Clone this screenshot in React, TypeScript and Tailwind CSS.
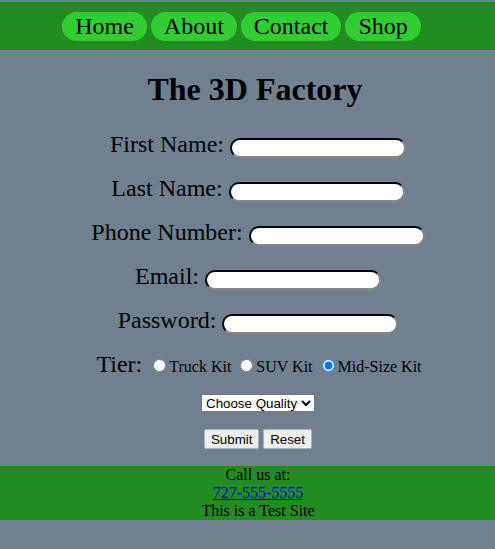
import React from 'react';

const navLinks = ['Home', 'About', 'Contact', 'Shop'];

const fields = [
  { label: 'First Name:', type: 'text' },
  { label: 'Last Name:', type: 'text' },
  { label: 'Phone Number:', type: 'tel' },
  { label: 'Email:', type: 'email' },
  { label: 'Password:', type: 'password' },
];

const tiers = ['Truck Kit', 'SUV Kit', 'Mid-Size Kit'];

export default function App() {
  return (
    <div className="min-h-screen bg-[#708090] pt-[2px] text-black font-['Liberation_Serif',serif]">
      {/* nav bar */}
      <nav className="h-12 bg-[#228b22] flex items-center justify-center gap-1 pr-[12px]">
        {navLinks.map((link) => (
          <a
            key={link}
            href="#"
            className="h-[29px] px-[13px] flex items-center rounded-full bg-[#32cd32] text-2xl text-black no-underline"
          >
            {link}
          </a>
        ))}
      </nav>

      <main className="pl-[21px]">
        <h1 className="text-center text-[32px] font-bold leading-[37px] mt-[21px] mb-[22px] pr-[6px]">
          The 3D Factory
        </h1>

        <form className="flex flex-col gap-4" onSubmit={(e) => e.preventDefault()}>
          {fields.map((field) => (
            <div key={field.label} className="text-center text-2xl leading-[28px]">
              <label>{field.label}</label>{' '}
              <input
                type={field.type}
                className="w-[176px] h-5 text-[13px] bg-white rounded-full border-2 border-[#333] [border-style:inset] align-baseline"
              />
            </div>
          ))}

          <div className="text-center text-2xl leading-[28px] pl-[2px]">
            <span>Tier:</span>{' '}
            {tiers.map((tier, i) => (
              <React.Fragment key={tier}>
                <input
                  type="radio"
                  name="tier"
                  defaultChecked={tier === 'Mid-Size Kit'}
                  className="ml-[5px] mr-[3px] mt-[3px] w-[13px] h-[13px]"
                />
                <label className="text-base">
                  {tier}
                  {i < tiers.length - 1 ? ' ' : ''}
                </label>
              </React.Fragment>
            ))}
          </div>

          <div className="text-center mt-[-4px]">
            <select className="w-[114px] h-[18px] bg-white border border-[#767676] text-[13.33px] font-['Liberation_Sans',Arial,sans-serif] text-black">
              <option>Choose Quality</option>
              <option>Standard</option>
              <option>Premium</option>
            </select>
          </div>

          <div className="text-center mt-[-2px] font-['Liberation_Sans',Arial,sans-serif] text-[13.33px]">
            <button
              type="submit"
              className="h-5 px-[6px] bg-[#efefef] border border-[#b0b0b0] rounded-[2px]"
            >
              Submit
            </button>{' '}
            <button
              type="reset"
              className="h-5 px-[6px] bg-[#efefef] border border-[#b0b0b0] rounded-[2px]"
            >
              Reset
            </button>
          </div>
        </form>
      </main>

      <footer className="mt-4 bg-[#228b22] pl-[21px] text-center text-base leading-[18px]">
        <p>Call us at:</p>
        <a href="#" className="text-[#0000ee] underline">
          727-555-5555
        </a>
        <p>This is a Test Site</p>
      </footer>
    </div>
  );
}
